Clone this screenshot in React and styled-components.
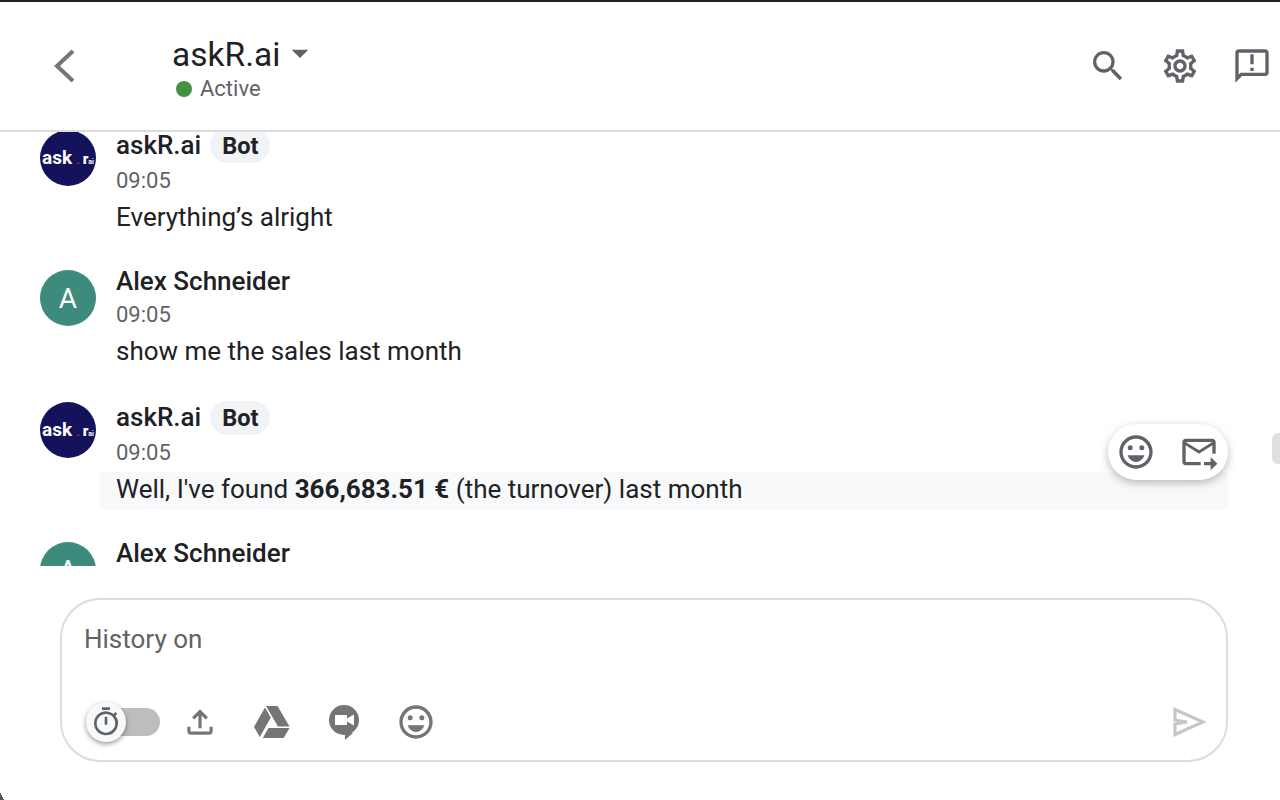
import React from 'react';
import styled, { createGlobalStyle } from 'styled-components';
import {
	MdSearch,
	MdOutlineSettings,
	MdOutlineAnnouncement,
	MdOutlineEmojiEmotions,
	MdOutlineForwardToInbox,
	MdOutlineTimer,
	MdOutlineFileUpload,
	MdArrowDropDown,
} from 'react-icons/md';

const GlobalStyle = createGlobalStyle`
	html, body {
		margin: 0;
		padding: 0;
		background: #fff;
		font-family: Roboto, "Liberation Sans", sans-serif;
		color: #202124;
	}
`;

const Page = styled.div`
	position: relative;
	width: 1280px;
	height: 800px;
	overflow: hidden;
	display: flex;
	flex-direction: column;
	background: #fff;
	border-top: 2px solid #202124;
	box-sizing: border-box;
`;

const Corner = styled.div`
	position: absolute;
	left: 0;
	bottom: 0;
	width: 4px;
	height: 8px;
	background: linear-gradient(to top right, #555 50%, transparent 50%);
`;

const Header = styled.header`
	flex: 0 0 128px;
	display: flex;
	align-items: center;
	padding: 0 0 0 52px;
`;

const BackButton = styled.div`
	width: 120px;
	height: 40px;
	display: flex;
	align-items: center;
	color: #757575;
`;

const TitleBlock = styled.div`
	display: flex;
	flex-direction: column;
	margin-top: 6px;
`;

const TitleRow = styled.div`
	display: flex;
	align-items: center;
	font-size: 33.5px;
	line-height: 40px;
	color: #202124;
	svg {
		margin: -4px 0 0 0;
		color: #5f6368;
	}
`;

const Status = styled.div`
	display: flex;
	align-items: center;
	gap: 8px;
	font-size: 22px;
	line-height: 28px;
	color: #5f6368;
	padding-left: 4px;
`;

const Dot = styled.span`
	width: 16px;
	height: 16px;
	border-radius: 50%;
	background: #43923f;
`;

const HeaderActions = styled.div`
	margin-left: auto;
	margin-right: -8px;
	display: flex;
	color: #5f6368;
`;

const IconSlot = styled.div`
	width: 72px;
	height: 48px;
	display: flex;
	align-items: center;
	justify-content: center;
`;

const Thread = styled.div`
	position: relative;
	flex: 0 0 436px;
	overflow: hidden;
	border-top: 2px solid #dadce0;
	box-sizing: border-box;
`;

const MessageList = styled.div`
	display: flex;
	flex-direction: column;
	gap: 32px;
	margin-top: -2px;
`;

const Message = styled.div`
	position: relative;
	display: grid;
	grid-template-columns: 56px 1fr;
	column-gap: 20px;
	padding: 0 52px 0 40px;
`;

const Avatar = styled.div`
	width: 56px;
	height: 56px;
	border-radius: 50%;
	display: flex;
	align-items: center;
	justify-content: center;
	background: ${(p) => (p.$bot ? '#14125a' : '#3d8b7d')};
	color: #fff;
	font-size: 28px;
	overflow: hidden;
`;

const LogoText = styled.span`
	font-size: 19px;
	font-weight: 700;
	color: #fff;
	margin-top: -1px;
	white-space: nowrap;
	i {
		font-size: 12px;
		font-style: normal;
		color: #b3261e;
		margin: 0 3px 0 4px;
	}
	small {
		font-size: 15px;
		font-weight: 900;
	}
	em {
		font-size: 7px;
		font-style: normal;
	}
`;

const Body = styled.div`
	min-width: 0;
`;

const NameRow = styled.div`
	display: flex;
	align-items: center;
	gap: 9px;
	height: ${(p) => (p.$bot ? '30px' : '22px')};
	font-size: 26px;
	font-weight: 500;
	color: #202124;
`;

const Chip = styled.span`
	height: 34px;
	padding: 0 12px;
	display: inline-flex;
	align-items: center;
	border-radius: 17px;
	background: #f1f3f4;
	font-size: 23.5px;
	font-weight: 700;
	margin-top: 2px;
`;

const Time = styled.div`
	margin-top: ${(p) => (p.$bot ? '11px' : '13px')};
	font-size: 22px;
	line-height: 20px;
	color: #5f6368;
`;

const Text = styled.div`
	margin: ${(p) => (p.$bot ? '9px' : '7px')} 0 0 -16px;
	padding: 0 0 ${(p) => (p.$bot ? '4px' : '0')} 16px;
	font-size: 26px;
	line-height: ${(p) => (p.$bot ? '34px' : '38px')};
	color: #202124;
	border-radius: 4px;
	background: ${(p) => (p.$highlight ? '#f8f9fa' : 'transparent')};
	b {
		font-weight: 700;
	}
`;

const HoverActions = styled.div`
	position: absolute;
	right: 52px;
	top: 22px;
	width: 120px;
	height: 56px;
	box-sizing: border-box;
	padding: 0 9px 0 8px;
	display: flex;
	align-items: center;
	justify-content: space-between;
	border-radius: 28px;
	background: #fff;
	box-shadow: 0 3px 8px rgba(60, 64, 67, 0.35);
	color: #5f6368;
`;

const ScrollStub = styled.div`
	position: absolute;
	right: 0;
	top: 301px;
	width: 8px;
	height: 31px;
	border-radius: 6px 0 0 6px;
	background: #e0e0e0;
`;

const Composer = styled.div`
	margin: 32px 52px 0 60px;
	height: 164px;
	box-sizing: border-box;
	border: 2px solid #dadce0;
	border-radius: 40px;
	display: flex;
	flex-direction: column;
	justify-content: space-between;
	padding: 22px 16px 14px 22px;
`;

const Placeholder = styled.div`
	font-size: 26px;
	line-height: 34px;
	color: #5f6368;
`;

const ToolRow = styled.div`
	display: flex;
	align-items: center;
	color: #757575;
`;

const Toggle = styled.div`
	position: relative;
	width: 74px;
	height: 40px;
	margin: 0 4px 0 2px;
`;

const Track = styled.div`
	position: absolute;
	left: 10px;
	right: 0;
	top: 6px;
	height: 28px;
	border-radius: 14px;
	background: #bdbdbd;
`;

const Thumb = styled.div`
	position: absolute;
	left: 0;
	top: 0;
	width: 40px;
	height: 40px;
	border-radius: 50%;
	background: #f8f9fa;
	box-shadow: 0 2px 5px rgba(0, 0, 0, 0.4);
	color: #5f6368;
	display: flex;
	align-items: center;
	justify-content: center;
`;

const SendSlot = styled.div`
	margin-left: auto;
	width: 40px;
	display: flex;
	justify-content: center;
	color: #c4c7ca;
`;

const BackIcon = () => (
	<svg width="24" height="34" viewBox="0 0 24 34" fill="none">
		<path d="M21 2 L5 17 L21 32" stroke="currentColor" strokeWidth="4" />
	</svg>
);

const DriveIcon = () => (
	<svg width="36" height="32" viewBox="0 0 36 32" fill="currentColor">
		<path d="M12 0h11.500l12 20.500H24z" />
		<path d="M11 1.500 16.800 11.500 5.800 31 0 21z" />
		<path d="M14.500 22h21l-5.800 10H8.800z" />
	</svg>
);

const MeetIcon = () => (
	<svg width="32" height="36" viewBox="0 0 32 36" fill="currentColor">
		<circle cx="16" cy="16" r="15" />
		<path d="M17 29v7l8-7z" />
		<path fill="#fff" d="M7 11h11c.6 0 1 .4 1 1v2.500l7-4v11l-7-4V20c0 .6-.4 1-1 1H7z" />
	</svg>
);

const SendIcon = () => (
	<svg width="34" height="30" viewBox="0 0 34 30" fill="none">
		<path d="M2 2.500 30 15 2 27.500V17l12-2-12-2z" stroke="currentColor" strokeWidth="3.200" strokeLinejoin="miter" />
	</svg>
);

const BotLogo = () => (
	<LogoText>
		ask<i>.</i>
		<small>r</small>
		<em>ai</em>
	</LogoText>
);

const App = () => {
	return (
		<Page>
			<GlobalStyle />
			<Header>
				<BackButton>
					<BackIcon />
				</BackButton>
				<TitleBlock>
					<TitleRow>
						askR.ai
						<MdArrowDropDown size={40} />
					</TitleRow>
					<Status>
						<Dot />
						Active
					</Status>
				</TitleBlock>
				<HeaderActions>
					<IconSlot>
						<MdSearch size={40} />
					</IconSlot>
					<IconSlot>
						<MdOutlineSettings size={40} />
					</IconSlot>
					<IconSlot>
						<MdOutlineAnnouncement size={40} />
					</IconSlot>
				</HeaderActions>
			</Header>
			<Thread>
				<MessageList>
					<Message>
						<Avatar $bot>
							<BotLogo />
						</Avatar>
						<Body>
							<NameRow $bot>
								askR.ai<Chip>Bot</Chip>
							</NameRow>
							<Time $bot>09:05</Time>
							<Text $bot>Everything’s alright</Text>
						</Body>
					</Message>
					<Message>
						<Avatar>A</Avatar>
						<Body>
							<NameRow>Alex Schneider</NameRow>
							<Time>09:05</Time>
							<Text>show me the sales last month</Text>
						</Body>
					</Message>
					<Message>
						<Avatar $bot>
							<BotLogo />
						</Avatar>
						<Body>
							<NameRow $bot>
								askR.ai<Chip>Bot</Chip>
							</NameRow>
							<Time $bot>09:05</Time>
							<Text $bot $highlight>
								Well, I've found <b>366,683.51 €</b> (the turnover) last month
							</Text>
						</Body>
						<HoverActions>
							<MdOutlineEmojiEmotions size={40} />
							<MdOutlineForwardToInbox size={40} />
						</HoverActions>
					</Message>
					<Message>
						<Avatar>A</Avatar>
						<Body>
							<NameRow>Alex Schneider</NameRow>
						</Body>
					</Message>
				</MessageList>
				<ScrollStub />
			</Thread>
			<Composer>
				<Placeholder>History on</Placeholder>
				<ToolRow>
					<Toggle>
						<Track />
						<Thumb>
							<MdOutlineTimer size={32} />
						</Thumb>
					</Toggle>
					<IconSlot>
						<MdOutlineFileUpload size={38} />
					</IconSlot>
					<IconSlot>
						<DriveIcon />
					</IconSlot>
					<IconSlot>
						<MeetIcon />
					</IconSlot>
					<IconSlot>
						<MdOutlineEmojiEmotions size={40} />
					</IconSlot>
					<SendSlot>
						<SendIcon />
					</SendSlot>
				</ToolRow>
			</Composer>
			<Corner />
		</Page>
	);
};

export default App;
